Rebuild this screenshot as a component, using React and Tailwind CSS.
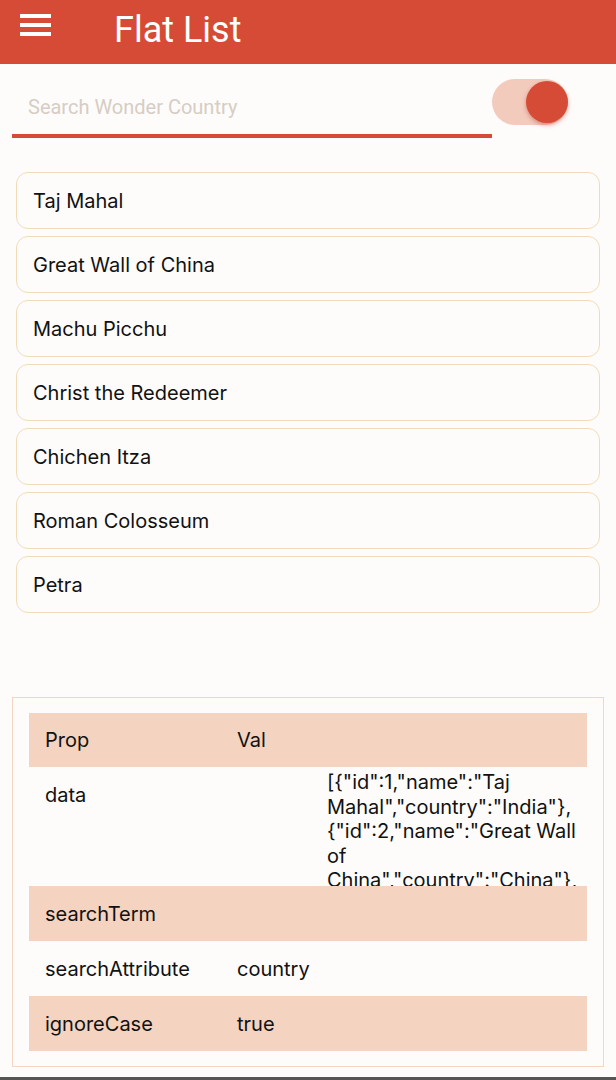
import { useState } from 'react';

const wonders = [
  { id: 1, name: 'Taj Mahal', country: 'India' },
  { id: 2, name: 'Great Wall of China', country: 'China' },
  { id: 3, name: 'Machu Picchu', country: 'Peru' },
  { id: 4, name: 'Christ the Redeemer', country: 'Brazil' },
  { id: 5, name: 'Chichen Itza', country: 'Mexico' },
  { id: 6, name: 'Roman Colosseum', country: 'Italy' },
  { id: 7, name: 'Petra', country: 'Jordan' },
];

export default function App() {
  const [search, setSearch] = useState('');
  const [ignoreCase, setIgnoreCase] = useState(true);

  const filtered = wonders.filter((w) =>
    ignoreCase
      ? w.country.toLowerCase().includes(search.toLowerCase())
      : w.country.includes(search)
  );

  return (
    <div className="h-[1080px] overflow-hidden bg-[#fdfcfb] flex flex-col font-['Inter',sans-serif] text-[#111]">
      {/* Header */}
      <div className="h-16 shrink-0 bg-[#d64b35] flex items-center">
        <button className="ml-5 w-[31px] self-start mt-[14px] flex flex-col gap-[5px]">
          <span className="block h-1 bg-white" />
          <span className="block h-1 bg-white" />
          <span className="block h-1 bg-white" />
        </button>
        <h1 className="ml-[63px] text-[36px] leading-none text-white font-['Roboto',sans-serif] -mt-1">
          Flat List
        </h1>
      </div>

      {/* Search + toggle */}
      <div className="flex items-start pt-[15px] pl-3 shrink-0">
        <div className="w-[480px] border-b-[4px] border-[#d64b35] h-[59px] flex items-center">
          <input
            value={search}
            onChange={(e) => setSearch(e.target.value)}
            placeholder="Search Wonder Country"
            className="w-full pl-4 text-[20px] font-['Roboto',sans-serif] bg-transparent outline-none placeholder:text-[#d6cdc4]"
          />
        </div>
        <button
          onClick={() => setIgnoreCase(!ignoreCase)}
          className="relative w-[76px] h-[46px] rounded-full bg-[#f3cbbd]"
        >
          <span className="absolute right-0 top-[2px] w-[42px] h-[42px] rounded-full bg-[#d64b35] shadow-[0_2px_4px_rgba(180,60,40,0.45)]" />
        </button>
      </div>

      {/* List */}
      <div className="mt-[34px] px-4 flex flex-col gap-[7px] h-[525px] shrink-0">
        {filtered.map((w) => (
          <div
            key={w.id}
            className="h-[57px] shrink-0 rounded-xl border border-[#f0dcb8] flex items-center pl-4 text-[20px]"
          >
            {w.name}
          </div>
        ))}
      </div>

      {/* Props table */}
      <div className="mx-3 border border-[#f5d6c6] px-4 pt-[15px] pb-[15px] text-[20px] shrink-0">
        <div className="h-[54px] bg-[#f4d3c0] flex items-center">
          <div className="w-[208px] pl-4">Prop</div>
          <div>Val</div>
        </div>
        <div className="h-[119px] flex overflow-hidden">
          <div className="w-[208px] pl-4 pt-[15px] leading-[26px]">data</div>
          <div className="flex-1 flex justify-end">
            <div className="w-[260px] pt-[3px] leading-[24.5px] break-words">
              {JSON.stringify(wonders)}
            </div>
          </div>
        </div>
        <div className="h-[55px] bg-[#f4d3c0] flex items-center">
          <div className="w-[208px] pl-4">searchTerm</div>
          <div>{search}</div>
        </div>
        <div className="h-[55px] flex items-center">
          <div className="w-[208px] pl-4">searchAttribute</div>
          <div>country</div>
        </div>
        <div className="h-[55px] bg-[#f4d3c0] flex items-center">
          <div className="w-[208px] pl-4">ignoreCase</div>
          <div>{String(ignoreCase)}</div>
        </div>
      </div>

      <div className="flex-1" />
      <div className="h-[3px] shrink-0 bg-[#555]" />
    </div>
  );
}
